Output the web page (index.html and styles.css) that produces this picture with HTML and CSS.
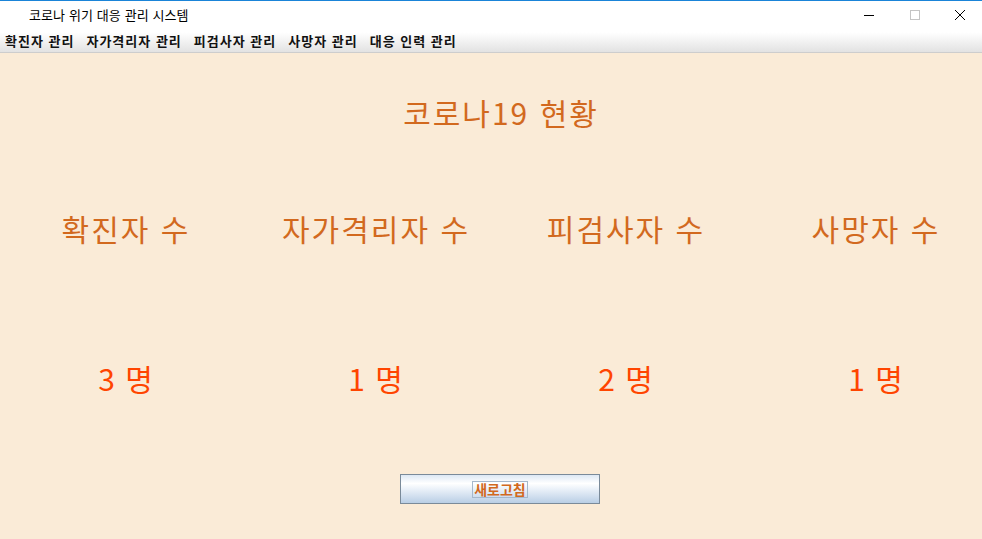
FILE: index.html
```html
<!DOCTYPE html>
<html lang="ko">
<head>
<meta charset="utf-8">
<title>코로나 위기 대응 관리 시스템</title>
<link rel="stylesheet" href="styles.css">
</head>
<body>
<div class="window">
  <div class="titlebar">
    <span class="title">코로나 위기 대응 관리 시스템</span>
    <div class="controls">
      <span class="ctl">
        <svg width="12" height="12" viewBox="0 0 12 12"><path d="M1 6.5H11" stroke="#000" stroke-width="1"/></svg>
      </span>
      <span class="ctl">
        <svg width="12" height="12" viewBox="0 0 12 12"><rect x="1.5" y="1.5" width="9" height="9" fill="none" stroke="#c4c4c4" stroke-width="1"/></svg>
      </span>
      <span class="ctl">
        <svg width="12" height="12" viewBox="0 0 12 12"><path d="M1 1L11 11M11 1L1 11" stroke="#000" stroke-width="1"/></svg>
      </span>
    </div>
  </div>
  <div class="menubar">
    <span class="menu">확진자 관리</span>
    <span class="menu">자가격리자 관리</span>
    <span class="menu">피검사자 관리</span>
    <span class="menu">사망자 관리</span>
    <span class="menu">대응 인력 관리</span>
  </div>
  <div class="content">
    <h1 class="heading">코로나19 현황</h1>
    <div class="grid labels">
      <div>확진자 수</div>
      <div>자가격리자 수</div>
      <div>피검사자 수</div>
      <div>사망자 수</div>
    </div>
    <div class="grid counts">
      <div>3 명</div>
      <div>1 명</div>
      <div>2 명</div>
      <div>1 명</div>
    </div>
    <div class="btnrow">
      <button class="refresh"><span class="focus">새로고침</span></button>
    </div>
  </div>
</div>
</body>
</html>
```

FILE: styles.css
```css
* { box-sizing: border-box; }
html, body { margin: 0; padding: 0; }
body {
  width: 982px;
  height: 539px;
  overflow: hidden;
  font-family: "Noto Sans CJK KR", "Noto Sans", sans-serif;
  background: #FAEBD7;
}
.window {
  width: 982px;
  height: 539px;
  overflow: hidden;
  display: flex;
  flex-direction: column;
}
.titlebar {
  height: 29px;
  border-top: 1px solid #1a84d8;
  background: #fff;
  display: flex;
  align-items: center;
  justify-content: space-between;
  flex-shrink: 0;
}
.title {
  margin-left: 29px;
  font-size: 13px;
  letter-spacing: 0.1px;
  color: #000;
  line-height: 28px;
}
.controls { display: flex; height: 28px; }
.ctl {
  width: 46px;
  height: 28px;
  display: flex;
  align-items: center;
  justify-content: center;
}
.controls .ctl:last-child { width: 44px; }
.menubar {
  height: 24px;
  flex-shrink: 0;
  display: flex;
  align-items: center;
  padding-left: 5px;
  gap: 12px;
  background: linear-gradient(#ffffff 0%, #ffffff 15%, #e2e2e2 100%);
  border-bottom: 1px solid #cdcdcd;
}
.menu {
  font-size: 13px;
  font-weight: bold;
  color: #111;
  line-height: 20px;
  letter-spacing: 1px;
}
.content {
  width: 1000px;
  display: flex;
  flex-direction: column;
  align-items: center;
}
.heading {
  margin: 39px 0 0;
  font-size: 30px;
  font-weight: normal;
  line-height: 40px;
  color: #D2691E;
  letter-spacing: 2px;
  padding-left: 2px;
}
.grid {
  width: 1000px;
  display: grid;
  grid-template-columns: repeat(4, 250px);
  text-align: center;
  font-size: 30px;
  line-height: 40px;
}
.grid div { padding-left: 2px; }
.labels { margin-top: 76px; color: #D2691E; letter-spacing: 2px; }
.counts { margin-top: 110px; color: #FF4500; letter-spacing: 1px; }
.btnrow { margin-top: 76px; display: flex; justify-content: center; }
.refresh {
  width: 200px;
  height: 30px;
  border: 1px solid #7a8a99;
  background: linear-gradient(#dde8f4 0%, #ffffff 30%, #e6eef7 55%, #b9cee5 100%);
  display: flex;
  align-items: center;
  justify-content: center;
  padding: 0;
  font-family: "Noto Sans CJK KR", sans-serif;
}
.focus {
  font-size: 14px;
  font-weight: bold;
  color: #D2691E;
  border: 1px solid #a5b8cc;
  padding: 0 1px;
  line-height: 15px;
}
```
